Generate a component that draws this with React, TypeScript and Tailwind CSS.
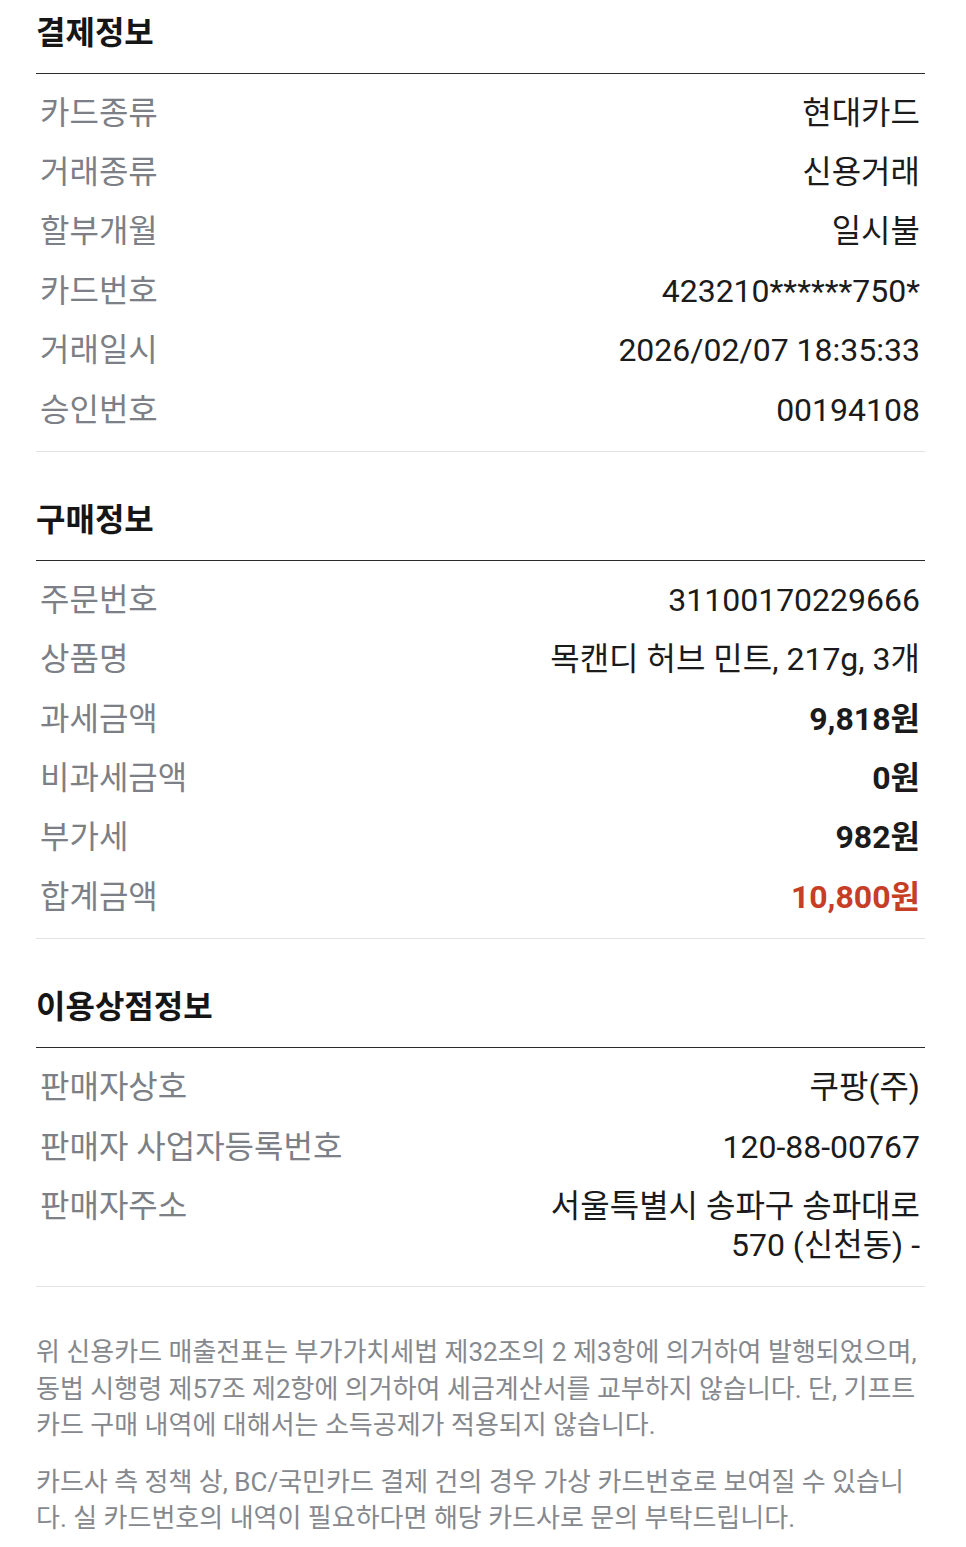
import React from "react";

type Row = {
  label: string;
  value: string;
  bold?: boolean;
  red?: boolean;
};

type Section = {
  title: string;
  rows: Row[];
};

const sections: Section[] = [
  {
    title: "결제정보",
    rows: [
      { label: "카드종류", value: "현대카드" },
      { label: "거래종류", value: "신용거래" },
      { label: "할부개월", value: "일시불" },
      { label: "카드번호", value: "423210******750*" },
      { label: "거래일시", value: "2026/02/07 18:35:33" },
      { label: "승인번호", value: "00194108" },
    ],
  },
  {
    title: "구매정보",
    rows: [
      { label: "주문번호", value: "31100170229666" },
      { label: "상품명", value: "목캔디 허브 민트, 217g, 3개" },
      { label: "과세금액", value: "9,818원", bold: true },
      { label: "비과세금액", value: "0원", bold: true },
      { label: "부가세", value: "982원", bold: true },
      { label: "합계금액", value: "10,800원", bold: true, red: true },
    ],
  },
  {
    title: "이용상점정보",
    rows: [
      { label: "판매자상호", value: "쿠팡(주)" },
      { label: "판매자 사업자등록번호", value: "120-88-00767" },
      { label: "판매자주소", value: "서울특별시 송파구 송파대로 570 (신천동) -" },
    ],
  },
];

export default function App() {
  return (
    <div className="min-h-[1547px] w-[966px] bg-white pl-[36px] pr-[41px] pt-[13.5px] font-['Roboto','Noto_Sans_CJK_KR',sans-serif]">
      {sections.map((section, s) => (
        <div key={section.title} className={s > 0 ? "mt-[49px]" : ""}>
          <h2 className="border-b border-[#2b2b2b] pb-[20px] text-[32px] font-bold leading-[39px] text-[#161616]">
            {section.title}
          </h2>
          <div className="border-b border-[#e3e3e3] pt-[10px] pb-[11px]">
            {section.rows.map((row) => (
              <div key={row.label} className="flex items-start justify-between py-[10.2px] text-[32px] leading-[39px]">
                <span className="pl-[4px] text-[#7c8086]">{row.label}</span>
                <span
                  className={
                    "max-w-[400px] pr-[5px] text-right " +
                    (row.bold ? "font-bold " : "") +
                    (row.red ? "text-[#c63e25]" : "text-[#1b1b1b]")
                  }
                >
                  {row.value}
                </span>
              </div>
            ))}
          </div>
        </div>
      ))}

      <div className="mt-[47px] flex flex-col gap-[20px] text-[26px] leading-[36.5px] text-[#85888d]">
        <p className="whitespace-nowrap">
          위 신용카드 매출전표는 부가가치세법 제32조의 2 제3항에 의거하여 발행되었으며,
          <br />
          동법 시행령 제57조 제2항에 의거하여 세금계산서를 교부하지 않습니다. 단, 기프트
          <br />
          카드 구매 내역에 대해서는 소득공제가 적용되지 않습니다.
        </p>
        <p className="whitespace-nowrap">
          카드사 측 정책 상, BC/국민카드 결제 건의 경우 가상 카드번호로 보여질 수 있습니
          <br />
          다. 실 카드번호의 내역이 필요하다면 해당 카드사로 문의 부탁드립니다.
        </p>
      </div>
    </div>
  );
}
